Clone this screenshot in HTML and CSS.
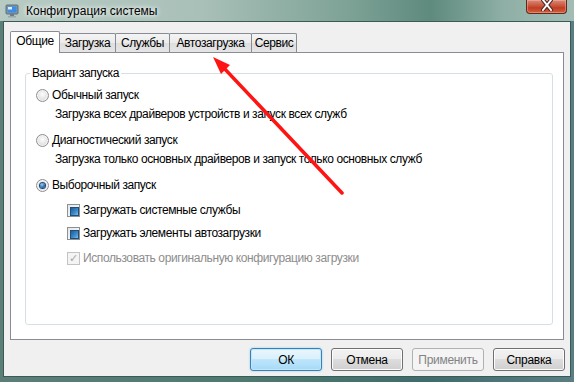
FILE: index.html
```html
<!DOCTYPE html>
<html lang="ru">
<head>
    <meta charset="UTF-8">
    <title>Конфигурация системы</title>
    <link rel="stylesheet" href="styles.css">
</head>
<body>
    <div class="window">
        <div class="titlebar">
            <svg class="app-icon" width="14" height="14" viewBox="0 0 14 14">
                <rect x="1" y="1" width="12" height="9" rx="1" fill="#8a9aa8" stroke="#4d5a66" stroke-width="0.8"/>
                <rect x="2.5" y="2.5" width="9" height="6" fill="#3d8ee0"/>
                <rect x="3" y="3" width="4" height="2.5" fill="#d8ecff"/>
                <rect x="5" y="10" width="4" height="2" fill="#6d7b86"/>
                <rect x="3" y="12" width="8" height="1.5" fill="#9aa6b0"/>
            </svg>
            <span class="title">Конфигурация системы</span>
            <div class="close-btn">
                <svg width="14" height="11" viewBox="0 0 14 11">
                    <path d="M3 0 L11 10 M11 0 L3 10" stroke="#4a2a24" stroke-width="4" stroke-linecap="round"/>
                    <path d="M3 0 L11 10 M11 0 L3 10" stroke="#ffffff" stroke-width="2" stroke-linecap="round"/>
                </svg>
            </div>
        </div>

        <div class="client">
            <div class="tabs">
                <div class="tab active">Общие</div>
                <div class="tab w-boot">Загрузка</div>
                <div class="tab w-svc">Службы</div>
                <div class="tab w-auto">Автозагрузка</div>
                <div class="tab w-tools">Сервис</div>
            </div>

            <div class="panel">
                <fieldset class="group">
                    <legend>Вариант запуска</legend>

                    <div class="opt">
                        <span class="radio"></span>
                        <span>Обычный запуск</span>
                    </div>
                    <div class="desc">Загрузка всех драйверов устройств и запуск всех служб</div>

                    <div class="opt gap-big">
                        <span class="radio"></span>
                        <span>Диагностический запуск</span>
                    </div>
                    <div class="desc">Загрузка только основных драйверов и запуск только основных служб</div>

                    <div class="opt gap-big">
                        <span class="radio checked"></span>
                        <span>Выборочный запуск</span>
                    </div>

                    <div class="opt sub first">
                        <span class="check mixed"></span>
                        <span>Загружать системные службы</span>
                    </div>
                    <div class="opt sub second">
                        <span class="check mixed"></span>
                        <span>Загружать элементы автозагрузки</span>
                    </div>
                    <div class="opt sub third disabled">
                        <span class="check ticked">✓</span>
                        <span>Использовать оригинальную конфигурацию загрузки</span>
                    </div>
                </fieldset>
            </div>

            <div class="buttons">
                <button class="btn default">ОК</button>
                <button class="btn">Отмена</button>
                <button class="btn" disabled>Применить</button>
                <button class="btn">Справка</button>
            </div>
        </div>

        <!-- стрелка поверх окна -->
        <svg class="arrow" width="574" height="382" viewBox="0 0 574 382">
            <line x1="342" y1="193" x2="222" y2="66" stroke="#ff1414" stroke-width="3.5" stroke-linecap="round"/>
            <polygon points="213,57 230,65 221,74" fill="#ff1414"/>
        </svg>
    </div>
</body>
</html>
```

FILE: styles.css
```css
* {
    margin: 0;
    padding: 0;
    box-sizing: border-box;
}

body {
    width: 574px;
    height: 382px;
    overflow: hidden;
    font-family: "Liberation Sans", Arial, sans-serif;
    font-size: 12px;
    color: #000;
}

.window {
    position: relative;
    width: 574px;
    height: 382px;
    display: flex;
    flex-direction: column;
    background: linear-gradient(90deg, #5b7f76 0%, #4f7a70 40%, #3f6c6c 75%, #5a7f83 100%);
}

/* заголовок */
.titlebar {
    height: 21px;
    display: flex;
    align-items: center;
    padding-left: 5px;
    background: linear-gradient(90deg, #b7cbc3 0%, #a9c0b8 35%, #7fa397 60%, #5f8a7e 75%, #8fb0a6 88%, #a3bdb5 100%);
}

.app-icon {
    margin-right: 7px;
    margin-top: 1px;
}

.title {
    color: #000;
    text-shadow: 0 0 6px #fff, 0 0 4px rgba(255,255,255,0.9);
    margin-top: 1px;
}

.close-btn {
    margin-left: auto;
    margin-right: 7px;
    align-self: flex-start;
    width: 41px;
    height: 14px;
    border: 1px solid #5a2b22;
    border-top: none;
    border-radius: 0 0 4px 4px;
    background: linear-gradient(180deg, #d98a78 0%, #c9553c 45%, #c13d22 60%, #d4603f 100%);
    display: flex;
    justify-content: center;
    align-items: flex-start;
    box-shadow: inset 0 0 0 1px rgba(255,200,180,0.4);
}

/* клиентская часть */
.client {
    flex: 1;
    margin: 0 3px 5px 3px;
    border: 1px solid #3c5a55;
    background: #f0f0f0;
    padding: 9px 6px 0 6px;
    letter-spacing: -0.4px;
}

.tabs {
    display: flex;
    align-items: flex-end;
    height: 21px;
}

.tab {
    height: 19px;
    border: 1px solid #898c95;
    border-bottom: none;
    margin-left: -1px;
    background: linear-gradient(180deg, #f4f4f4 0%, #ebebeb 50%, #dedede 51%, #e5e5e5 100%);
    text-align: center;
    line-height: 18px;
    border-radius: 2px 2px 0 0;
}

.tab.active {
    position: relative;
    z-index: 2;
    width: 50px;
    height: 22px;
    margin-left: 0;
    margin-bottom: -1px;
    background: #fff;
    line-height: 19px;
}

.w-boot { width: 57px; }
.w-svc { width: 55px; }
.w-auto { width: 83px; }
.w-tools { width: 46px; }

.panel {
    position: relative;
    z-index: 1;
    width: 554px;
    height: 288px;
    border: 1px solid #898c95;
    background: #fff;
    padding: 13px 10px 0 14px;
}

.group {
    height: 259px;
    border: 1px solid #d5dfe5;
    border-radius: 3px;
    padding: 7px 0 0 4px;
}

.group legend {
    padding: 0 2px;
    line-height: 14px;
}

.opt {
    display: flex;
    align-items: center;
    height: 16px;
    margin-left: 6px;
}

.desc {
    height: 16px;
    line-height: 16px;
    margin-left: 25px;
    margin-top: 3px;
}

.gap-big { margin-top: 10px; }

.opt.sub { margin-left: 37px; }
.opt.first { margin-top: 9px; }
.opt.second { margin-top: 7px; }
.opt.third { margin-top: 9px; }

.opt.disabled { color: #8d8d8d; }

.radio {
    width: 13px;
    height: 13px;
    margin-right: 3px;
    border-radius: 50%;
    border: 1px solid #8e8f8f;
    background: radial-gradient(circle at 50% 40%, #fdfdfd 0%, #e9e9e9 45%, #cfcfcf 100%);
    box-shadow: inset 0 0 0 1px #f4f4f4;
    position: relative;
}

.radio.checked::after {
    content: "";
    position: absolute;
    left: 3px;
    top: 3px;
    width: 5px;
    height: 5px;
    border-radius: 50%;
    background: radial-gradient(circle at 40% 35%, #9fd3f5 0%, #2b6fb0 55%, #0d3a6a 100%);
    box-shadow: 0 0 0 1px #1b4778;
}

.check {
    width: 13px;
    height: 13px;
    margin-right: 3px;
    border: 1px solid #8e8f8f;
    background: linear-gradient(135deg, #e6e6e6 0%, #fdfdfd 100%);
    position: relative;
}

.check.mixed::after {
    content: "";
    position: absolute;
    left: 2px;
    top: 2px;
    width: 7px;
    height: 7px;
    border: 1px solid #1f4d7e;
    background: linear-gradient(135deg, #1c5d99 0%, #3f8cc9 60%, #7ec0ea 100%);
}

.check.ticked {
    border-color: #c3c3c3;
    background: #f4f4f4;
    color: #a7a7a7;
    font-family: "DejaVu Sans", sans-serif;
    font-size: 11px;
    line-height: 11px;
    text-align: center;
    letter-spacing: 0;
}

/* кнопки */
.buttons {
    display: flex;
    justify-content: flex-end;
    gap: 9px;
    margin-top: 8px;
    margin-right: -1px;
}

.btn {
    width: 72px;
    height: 23px;
    font-family: "Liberation Sans", Arial, sans-serif;
    font-size: 12px;
    letter-spacing: -0.3px;
    color: #000;
    border: 1px solid #707070;
    border-radius: 3px;
    background: linear-gradient(180deg, #f2f2f2 0%, #ebebeb 49%, #dddddd 50%, #cfcfcf 100%);
    box-shadow: inset 0 0 0 1px #fcfcfc;
}

.btn.default {
    border-color: #3c7fb1;
    background: linear-gradient(180deg, #eaf6fd 0%, #d9f0fc 49%, #bee6fd 50%, #a7d9f5 100%);
    box-shadow: inset 0 0 0 1px #bfe7fe, 0 0 2px #7dc4f0;
}

.btn:disabled {
    border-color: #adb2b5;
    background: #f4f4f4;
    color: #838383;
    box-shadow: none;
}

.arrow {
    position: absolute;
    top: 0;
    left: 0;
    pointer-events: none;
    z-index: 5;
}
```
